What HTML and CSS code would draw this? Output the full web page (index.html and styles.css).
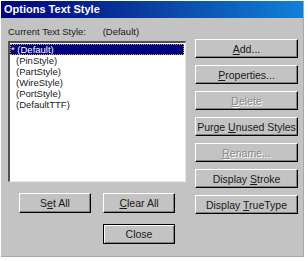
FILE: index.html
```html
<!DOCTYPE html>
<html lang="en">
<head>
    <meta charset="UTF-8">
    <meta name="viewport" content="width=device-width, initial-scale=1.0">
    <title>Options Text Style</title>
    <link rel="stylesheet" href="styles.css">
</head>
<body>
    <div class="dialog">
        <div class="title">Options Text Style</div>
        <div class="content">
            <div class="left">
                <div class="current">
                    <span class="label">Current Text Style:</span>
                    <span>(Default)</span>
                </div>
                <ul class="list">
                    <li class="selected">* (Default)</li>
                    <li>(PinStyle)</li>
                    <li>(PartStyle)</li>
                    <li>(WireStyle)</li>
                    <li>(PortStyle)</li>
                    <li>(DefaultTTF)</li>
                </ul>
                <div class="row">
                    <button class="btn small">S<u>e</u>t All</button>
                    <button class="btn small"><u>C</u>lear All</button>
                </div>
                <div class="row close-row">
                    <button class="btn small default">Close</button>
                </div>
            </div>
            <div class="right">
                <button class="btn"><u>A</u>dd...</button>
                <button class="btn"><u>P</u>roperties...</button>
                <button class="btn disabled"><u>D</u>elete</button>
                <button class="btn">Purge <u>U</u>nused Styles</button>
                <button class="btn disabled"><u>R</u>ename...</button>
                <button class="btn">Display <u>S</u>troke</button>
                <button class="btn">Display <u>T</u>rueType</button>
            </div>
        </div>
    </div>
</body>
</html>
```

FILE: styles.css
```css
body {
    margin: 0;
    background-color: #fff;
    font-family: "Liberation Sans", Arial, sans-serif;
    font-size: 9.5px;
    color: #1a1a1a;
}

.dialog {
    box-sizing: border-box;
    width: 303px;
    height: 256px;
    margin: 1px 0 0 1px;
    background-color: #c3c3c3;
    border-right: 1px solid #a8a8a8;
    border-bottom: 1px solid #a8a8a8;
}

/* 标题栏 渐变 */
.title {
    height: 17px;
    line-height: 17px;
    padding-left: 3px;
    font-weight: bold;
    font-size: 11px;
    color: #fff;
    background: linear-gradient(to right, #000080 0%, #0a3a9a 45%, #1080d8 100%);
}

.content {
    display: flex;
    gap: 9px;
    padding: 7px 0 0 7px;
}

.left {
    width: 178px;
}

.current {
    height: 14px;
    line-height: 14px;
    margin-bottom: 2px;
}

.current .label {
    display: inline-block;
    width: 92px;
}

.list {
    box-sizing: border-box;
    height: 141px;
    margin: 0;
    padding: 1px 0 0 0;
    list-style: none;
    background-color: #fff;
    border-top: 2px solid #505050;
    border-left: 2px solid #505050;
    border-right: 1px solid #e8e8e8;
    border-bottom: 1px solid #e8e8e8;
}

.list li {
    height: 11px;
    line-height: 11px;
    padding-left: 6px;
}

.list .selected {
    margin-right: 1px;
    padding-left: 1px;
    color: #fff;
    background-color: #000080;
    outline: 1px dotted #c0a040;
    outline-offset: -1px;
}

.row {
    display: flex;
    gap: 12px;
    padding-left: 11px;
    margin-top: 11px;
}

.close-row {
    padding-left: 95px;
}

.right {
    display: flex;
    flex-direction: column;
    gap: 7px;
    padding-top: 14px;
}

.btn {
    box-sizing: border-box;
    width: 103px;
    height: 19px;
    padding: 0;
    white-space: nowrap;
    font-family: "Liberation Sans", Arial, sans-serif;
    font-size: 10.5px;
    color: #1a1a1a;
    background-color: #c3c3c3;
    border: 1px solid;
    border-color: #fff #000 #000 #fff;
    box-shadow: inset -1px -1px 0 #808080;
}

.btn.small {
    width: 72px;
    height: 20px;
}

.btn.default {
    border-color: #000;
    box-shadow: inset 1px 1px 0 #fff, inset -1px -1px 0 #808080;
}

.btn.disabled {
    color: #8a8a8a;
    text-shadow: 1px 1px 0 #fff;
}
```
